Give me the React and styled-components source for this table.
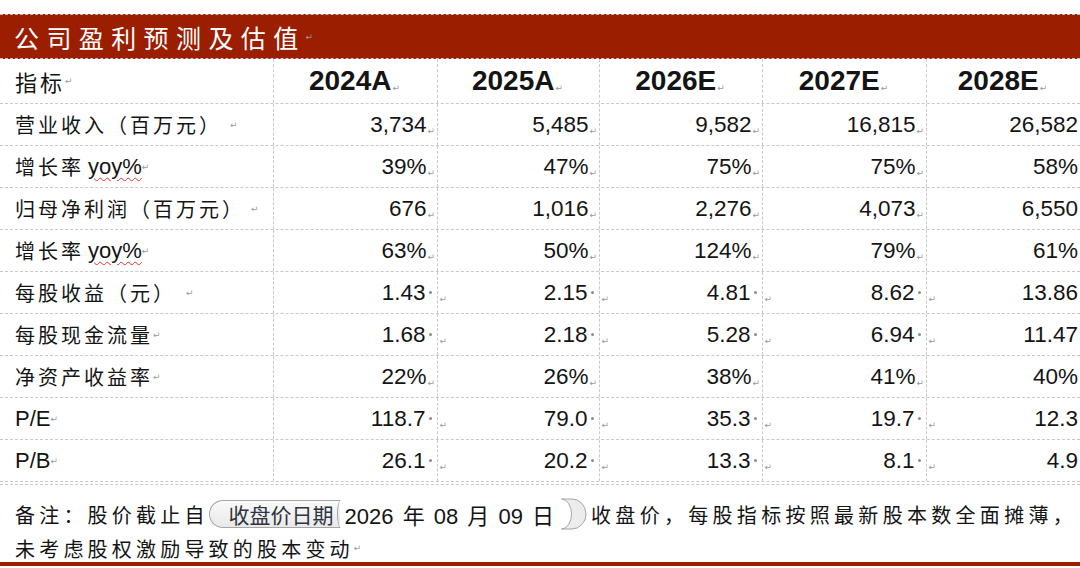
import React from 'react';
import styled, { createGlobalStyle } from 'styled-components';

const GlobalStyle = createGlobalStyle`
  html, body {
    margin: 0;
    padding: 0;
    background: #fff;
    overflow: hidden;
  }
`;

const RED = '#9b1e00';
const GRID = '1px dashed #c9c9c9';
const KAI = '"Noto Sans CJK SC", "Noto Sans", sans-serif';
const ARIAL = '"Liberation Sans", Arial, "Noto Sans CJK SC", sans-serif';
const COLS = '273px 164px 162px 163px 164px 154px';

const Page = styled.div`
  width: 1080px;
  padding-top: 14px;
  color: #141414;
`;

const TitleBar = styled.div`
  height: 43px;
  border-top: 1px dashed #bdbdbd;
  border-bottom: 1px dashed #c9c9c9;
  background: ${RED};
  display: flex;
  align-items: center;
  padding-left: 14px;
  color: #fff;
  font-family: ${KAI};
  font-size: 25px;
  letter-spacing: 7.4px;
`;

const Table = styled.div`
  border-bottom: ${GRID};
  padding-bottom: 2px;
`;

const Row = styled.div`
  display: grid;
  grid-template-columns: ${COLS};
  height: ${(p) => (p.$head ? 44 : 41)}px;
  border-bottom: ${GRID};
`;

const Cell = styled.div`
  display: flex;
  align-items: center;
  justify-content: ${(p) => (p.$center ? 'center' : 'flex-end')};
  padding-right: 2px;
  border-left: ${GRID};
  font-family: ${ARIAL};
  font-size: ${(p) => (p.$head ? 28 : 22.5)}px;
  font-weight: ${(p) => (p.$head ? 700 : 400)};
  white-space: nowrap;
`;

const LabelCell = styled.div`
  display: flex;
  align-items: center;
  padding-left: 15px;
  font-family: ${KAI};
  font-size: ${(p) => (p.$head ? 22 : 20)}px;
  letter-spacing: 3px;
  white-space: nowrap;
`;

const Latin = styled.span`
  font-family: ${ARIAL};
  font-size: 22px;
  letter-spacing: 0;
  margin-left: ${(p) => (p.$gap ? 4 : 0)}px;
  text-decoration: ${(p) => (p.$wavy ? 'underline wavy #e03030' : 'none')};
  text-decoration-thickness: 1px;
  text-underline-offset: 3px;
`;

const Mark = styled.span`
  font-family: "DejaVu Sans", sans-serif;
  font-size: 9px;
  font-weight: 400;
  letter-spacing: 0;
  color: #9a9a9a;
  align-self: flex-end;
  margin-bottom: ${(p) => (p.$low ? 10 : 9)}px;
  margin-left: ${(p) => (p.$spill ? 4 : 1)}px;
  margin-right: ${(p) => (p.$spill ? -12 : 0)}px;
`;

const InlineMark = styled.span`
  font-family: "DejaVu Sans", sans-serif;
  font-size: 9px;
  color: #9a9a9a;
  letter-spacing: 0;
  margin-left: ${(p) => p.$gap || 0}px;
  vertical-align: -2px;
`;

const Dot = styled.span`
  width: 3px;
  height: 3px;
  border-radius: 50%;
  background: #8a8a8a;
  margin: 0 3px 0 4px;
`;

const Note = styled.div`
  height: 77px;
  box-sizing: border-box;
  padding: 12px 0 0 15px;
  font-family: ${KAI};
  font-size: 20px;
  letter-spacing: 4.2px;
`;

const NoteLine = styled.div`
  display: flex;
  align-items: center;
  height: 34px;
  white-space: nowrap;
`;

const Wide = styled.span`
  letter-spacing: 4.3px;
`;

const StartTag = styled.span`
  display: inline-flex;
  align-items: center;
  height: 28px;
  box-sizing: border-box;
  padding: 0 6px 0 19px;
  border: 1px solid #a5a5a5;
  border-right: none;
  border-radius: 15px 0 0 15px;
  background: linear-gradient(#fafafa, #e9e9e9);
  color: #2f3540;
  font-size: 21px;
  letter-spacing: 0;
`;

const TagCurve = styled.span`
  flex: none;
  width: 8px;
  height: 28px;
  box-sizing: border-box;
  border-left: 1.5px solid #a5a5a5;
  border-radius: 50% 0 0 50% / 50% 0 0 50%;
  margin-left: -3px;
`;

const DateText = styled.span`
  font-family: ${ARIAL};
  font-size: 22px;
  letter-spacing: 0;
  word-spacing: 3px;
  margin-left: 0;
  margin-right: 6px;
`;

const EndTag = styled.svg`
  flex: none;
  margin-right: 3px;
`;

const BottomRule = styled.div`
  height: 4px;
  background: ${RED};
`;

const years = ['2024A', '2025A', '2026E', '2027E', '2028E'];

const rows = [
  { label: '营业收入（百万元）', labelGap: 8, values: ['3,734', '5,485', '9,582', '16,815', '26,582'] },
  { label: '增长率', latin: 'yoy%', wavy: true, values: ['39%', '47%', '75%', '75%', '58%'] },
  { label: '归母净利润（百万元）', labelGap: 6, values: ['676', '1,016', '2,276', '4,073', '6,550'] },
  { label: '增长率', latin: 'yoy%', wavy: true, values: ['63%', '50%', '124%', '79%', '61%'] },
  { label: '每股收益（元）', labelGap: 10, dot: true, values: ['1.43', '2.15', '4.81', '8.62', '13.86'] },
  { label: '每股现金流量', dot: true, values: ['1.68', '2.18', '5.28', '6.94', '11.47'] },
  { label: '净资产收益率', values: ['22%', '26%', '38%', '41%', '40%'] },
  { latin: 'P/E', dot: true, values: ['118.7', '79.0', '35.3', '19.7', '12.3'] },
  { latin: 'P/B', dot: true, values: ['26.1', '20.2', '13.3', '8.1', '4.9'] },
];

const ValueCell = ({ value, dot, last }) => (
  <Cell>
    <span>{value}</span>
    {!last &&
      (dot ? (
        <>
          <Dot />
          <Mark $spill>↵</Mark>
        </>
      ) : (
        <Mark>↵</Mark>
      ))}
  </Cell>
);

const Label = ({ row }) => (
  <LabelCell>
    {row.label}
    {row.latin && (
      <Latin $gap={!!row.label} $wavy={row.wavy}>
        {row.latin}
      </Latin>
    )}
    <InlineMark $gap={row.labelGap || 0}>↵</InlineMark>
  </LabelCell>
);

const App = () => (
  <Page>
    <GlobalStyle />
    <TitleBar>
      公司盈利预测及估值<InlineMark>↵</InlineMark>
    </TitleBar>
    <Table>
      <Row $head>
        <LabelCell $head>
          指标<InlineMark>↵</InlineMark>
        </LabelCell>
        {years.map((y) => (
          <Cell key={y} $head $center>
            <span>{y}</span>
            <Mark $low>↵</Mark>
          </Cell>
        ))}
      </Row>
      {rows.map((row, i) => (
        <Row key={i}>
          <Label row={row} />
          {row.values.map((v, j) => (
            <ValueCell key={j} value={v} dot={row.dot} last={j === row.values.length - 1} />
          ))}
        </Row>
      ))}
    </Table>
    <Note>
      <NoteLine>
        备注：股价截止自
        <StartTag>收盘价日期</StartTag>
        <TagCurve />
        <DateText>2026 年 08 月 09 日</DateText>
        <EndTag width="28" height="32" viewBox="0 0 28 32">
          <path
            d="M1.5 1 H12 A14 15 0 0 1 12 31 H1.5 A10 15 0 0 0 1.5 1 Z"
            fill="#ececec"
            stroke="#a5a5a5"
            strokeWidth="1"
          />
        </EndTag>
        <Wide>收盘价，每股指标按照最新股本数全面摊薄，</Wide>
      </NoteLine>
      <NoteLine>
        未考虑股权激励导致的股本变动<InlineMark>↵</InlineMark>
      </NoteLine>
    </Note>
    <BottomRule />
  </Page>
);

export default App;
